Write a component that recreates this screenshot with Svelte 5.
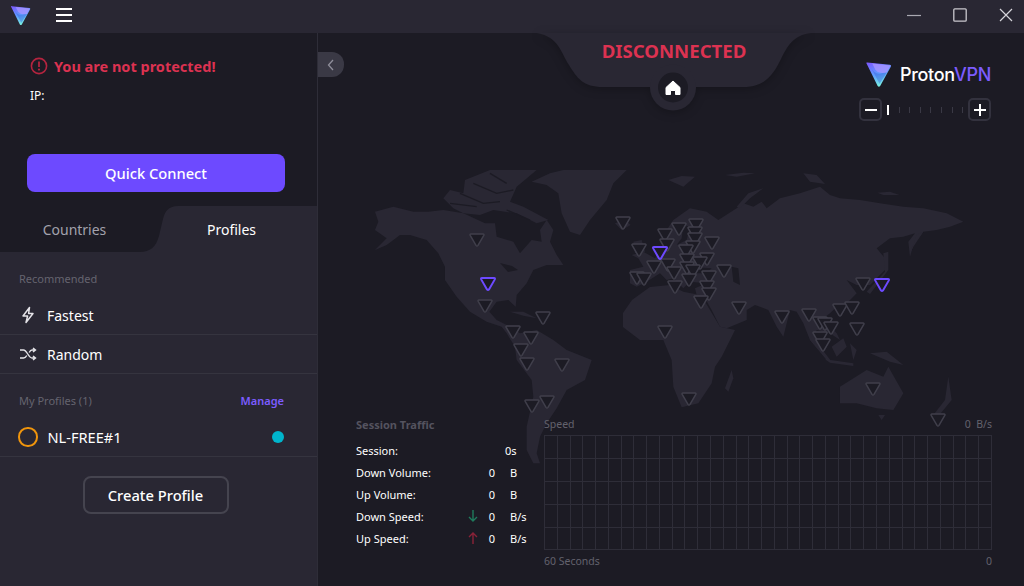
<script>
	// marker centres in page coordinates
	const servers = [
		[477, 240], [623, 223], [639, 250], [654, 267], [637, 278], [644, 279], [485, 306], [543, 318],
		[513, 332], [531, 338], [521, 350], [527, 364], [562, 365], [547, 402], [532, 406],
		[679, 229], [696, 225], [665, 235], [695, 233], [695, 239], [693, 247], [667, 245], [712, 243],
		[686, 251], [707, 259], [700, 263], [687, 260], [668, 265], [687, 268], [693, 271], [674, 273],
		[724, 271], [709, 277], [689, 280], [675, 287], [707, 287], [709, 294], [701, 302], [739, 308],
		[782, 317], [809, 315], [840, 310], [852, 308], [863, 284], [820, 323], [825, 324], [831, 328],
		[857, 329], [665, 332], [820, 338], [823, 345], [689, 399], [873, 389], [938, 420]
	];
	const active = [[660, 253], [488, 284], [882, 285]];

	const stats = [
		{ label: 'Session:', value: '', unit: '0s' },
		{ label: 'Down Volume:', value: '0', unit: 'B' },
		{ label: 'Up Volume:', value: '0', unit: 'B' },
		{ label: 'Down Speed:', arrow: 'down', value: '0', unit: 'B/s' },
		{ label: 'Up Speed:', arrow: 'up', value: '0', unit: 'B/s' }
	];

	const tri = 'M-6,-6 H6 Q7.4,-6 6.8,-4.6 L1,5.4 Q0,6.8 -1,5.4 L-6.8,-4.6 Q-7.4,-6 -6,-6 Z';
	const ticks = Array.from({ length: 7 }, (_, i) => i);
	const cols = Array.from({ length: 36 }, (_, i) => Math.round(i * 12.77) + 0.5);
	const rows = [0.5, 23.5, 46.5, 69.5, 92.5, 114.5];
</script>

{#snippet logo(size)}
	<svg width={size} height={size} viewBox="0 0 26 26">
		<defs>
			<linearGradient id="lg{size}" x1="0.2" y1="0" x2="0.55" y2="1">
				<stop offset="0" stop-color="#7a5cff" />
				<stop offset="0.5" stop-color="#5f9dff" />
				<stop offset="1" stop-color="#7af5e0" />
			</linearGradient>
		</defs>
		<path d="M1.5,2.5 Q0.6,1.3 2.2,1.4 L24,3.6 Q25.6,3.9 25,5.4 L14.6,24 Q13.4,25.6 12.2,24 Z" fill="url(#lg{size})" />
		<path d="M7,2.4 L24.6,4.4 L21,11 Q14,13 10,8.5 Z" fill="#a893ff" opacity="0.8" />
		<path d="M6,7 Q10,14 17,11.5 L21,11 L14,22 Z" fill="#2b4fd0" opacity="0.35" />
	</svg>
{/snippet}

<div class="app">
	<header class="titlebar">
		<div class="brand">{@render logo(21)}</div>
		<div class="burger"><i></i><i></i><i></i></div>
		<div class="controls">
			<svg width="14" height="14" viewBox="0 0 14 14"><path d="M0,7.5 H14" stroke="#aaa9b2" stroke-width="1.2" /></svg>
			<svg width="14" height="14" viewBox="0 0 14 14"><rect x="0.8" y="0.8" width="12.4" height="12.4" rx="1" fill="none" stroke="#c9c8ce" stroke-width="1.3" /></svg>
			<svg width="14" height="14" viewBox="0 0 14 14"><path d="M1,1 L13,13 M13,1 L1,13" stroke="#d5d4da" stroke-width="1.2" /></svg>
		</div>
	</header>

	<div class="body">
		<aside class="sidebar">
			<section class="status">
				<div class="warning">
					<svg width="18" height="18" viewBox="0 0 18 18">
						<circle cx="9" cy="9" r="7.6" fill="none" stroke="#b4243f" stroke-width="1.6" />
						<path d="M9,4.6 V10" stroke="#b4243f" stroke-width="1.8" />
						<circle cx="9" cy="12.6" r="1.1" fill="#b4243f" />
					</svg>
					<span>You are not protected!</span>
				</div>
				<div class="ip">IP:</div>
				<button class="quick">Quick Connect</button>
			</section>

			<div class="tabs">
				<svg class="tabshape" width="317" height="46" viewBox="0 0 317 46">
					<path d="M0,0 H178 C169,0 165,5 163,13 L159,30 C156,41 150,46 140,46 H0 Z" fill="#1c1b24" />
				</svg>
				<div class="tab">Countries</div>
				<div class="tab on">Profiles</div>
			</div>

			<div class="panel">
				<div class="heading first"><span>Recommended</span></div>
				<div class="row first-row">
					<svg class="ico" width="18" height="18" viewBox="0 0 18 18">
						<path d="M10.5,1.5 L4,10 H8.6 L7,16.5 L14,7.5 H9.6 Z" fill="none" stroke="#e4e3e8" stroke-width="1.5" stroke-linejoin="round" />
					</svg>
					<span>Fastest</span>
				</div>
				<div class="row">
					<svg class="ico" width="18" height="18" viewBox="0 0 18 18">
						<path d="M1,5 H4.5 C8,5 9.5,13 13,13 H16 M1,13 H4.5 C6,13 7,12 7.8,10.5 M10.2,7.5 C11,6 12,5 13,5 H16 M14,3 L16.5,5 L14,7 M14,11 L16.5,13 L14,15" fill="none" stroke="#e4e3e8" stroke-width="1.4" />
					</svg>
					<span>Random</span>
				</div>
				<div class="heading">
					<span>My Profiles (1)</span>
					<a class="manage" href="#manage">Manage</a>
				</div>
				<div class="row profile">
					<span class="ring"></span>
					<span>NL-FREE#1</span>
					<span class="dot"></span>
				</div>
				<button class="create">Create Profile</button>
			</div>
		</aside>

		<main class="map">
			<svg class="world" width="706" height="553" viewBox="318 33 706 553">
				<g fill="#292733">
					<g transform="translate(350,170) scale(.33333)">
						<path d="M75,125 L130,110 L190,125 L235,125 L280,120 L340,130 L405,160 L435,160 L440,200 L490,215 L510,250 L545,210 L575,215 L570,180 L590,150 L610,180 L600,215 L620,255 L640,285 L590,285 L550,300 L530,340 L500,375 L497,410 L475,390 L440,395 L418,425 L440,450 L470,465 L510,490 L560,480 L610,510 L650,540 L725,570 L705,630 L650,660 L620,715 L590,760 L570,800 L560,850 L570,880 L550,880 L530,840 L530,770 L550,680 L545,630 L500,570 L495,530 L470,490 L455,470 L410,455 L360,425 L320,380 L285,330 L285,290 L265,250 L230,210 L180,195 L150,195 L110,225 L75,240 L110,205 L75,180 L85,155 Z" />
						<path d="M280,85 L300,60 L340,70 L345,30 L420,0 L560,0 L500,50 L480,95 L520,110 L595,150 L560,160 L500,130 L430,120 L390,135 L340,130 L310,115 Z" />
						<path d="M545,35 L600,10 L640,0 L830,0 L790,40 L770,90 L720,150 L690,195 L660,185 L635,130 L625,70 L590,45 Z" />
						<path d="M480,425 L520,425 L560,445 L520,437 Z M565,447 L590,450 L575,458 Z M795,160 L825,150 L842,165 L815,180 Z" />
					</g>
					<g transform="translate(640,170) scale(.33333)">
						<path d="M-30,300 L10,290 L-5,265 L-25,255 L10,245 L45,265 L75,225 L100,215 L70,195 L100,150 L150,115 L200,125 L235,150 L290,115 L310,100 L340,110 L365,95 L380,115 L420,85 L480,70 L540,50 L570,75 L600,85 L660,90 L720,100 L790,110 L850,115 L920,130 L970,155 L930,170 L890,180 L850,185 L820,225 L810,260 L805,215 L825,190 L790,200 L750,205 L710,235 L735,265 L740,295 L710,325 L690,345 L650,345 L620,330 L650,370 L625,395 L590,410 L570,430 L550,445 L590,490 L600,510 L570,490 L530,480 L525,500 L545,550 L510,510 L490,460 L470,425 L450,420 L430,500 L410,470 L385,420 L345,405 L320,420 L320,450 L260,475 L240,470 L215,420 L195,385 L170,375 L165,355 L200,340 L150,335 L130,355 L100,325 L80,330 L60,310 L20,335 L-10,350 L-30,340 Z" />
						<path d="M-51,429 L-24,390 L30,351 L90,345 L130,365 L180,375 L195,395 L240,470 L285,480 L245,560 L225,590 L215,640 L175,700 L125,712 L100,650 L95,570 L70,510 L0,510 L-51,471 Z" />
						<path d="M600,650 L680,600 L730,620 L745,590 L790,670 L760,720 L710,715 L650,700 L600,700 Z M715,735 L735,735 L725,750 Z" />
						<path d="M255,655 L275,600 L280,625 L265,665 Z" />
						<path d="M510,510 L540,530 L575,575 L560,570 Z M555,568 L640,580 L640,588 L570,578 Z M575,530 L610,505 L620,530 L590,560 Z M630,520 L650,540 L640,570 Z M690,550 L740,545 L790,585 L750,575 Z" />
						<path d="M730,250 L745,245 L745,300 L690,372 L680,365 L735,305 Z M808,255 L830,195 L850,185 L820,230 Z" />
						<path d="M-20,215 L5,210 L15,245 L-15,250 Z" />
						<path d="M290,110 L325,70 L370,55 L330,85 L300,115 Z M85,30 L125,18 L165,20 L130,50 Z M255,15 L310,8 L345,10 L290,20 Z M490,10 L530,15 L555,42 L510,35 Z M712,68 L750,65 L778,75 L730,75 Z" />
						<path d="M880,735 L915,690 L925,620 L935,690 L890,745 Z" />
					</g>
				</g>
				<!-- seas and channels cut back out of the land -->
				<g fill="#1c1b24" transform="translate(640,170) scale(.33333)">
					<path d="M275,290 L295,295 L300,345 L280,335 Z M150,290 L215,295 L200,310 L160,310 Z M130,165 L125,205 L110,225 L140,210 L150,170 Z" />
				</g>
				<g fill="none" stroke="#1c1b24" stroke-width="1.3" transform="translate(350,170) scale(.33333)">
					<path d="M330,70 L400,100 L450,95 M370,40 L440,70 L490,60 M420,10 L470,40 M300,100 L380,110 M470,120 L540,150" stroke-width="4" />
				</g>
				<path fill="#1c1b24" d="M500,263 L512,266 L518,270 L508,272 Z" />

				{#each servers as [x, y]}
					<path d={tri} transform="translate({x},{y})" fill="#1c1b24" stroke="#403f4b" stroke-width="1.5" />
				{/each}
				{#each active as [x, y]}
					<path d={tri} transform="translate({x},{y})" fill="#1c1b24" stroke="#6d4aff" stroke-width="2" />
				{/each}
			</svg>

			<button class="collapse" aria-label="Collapse">
				<svg width="10" height="12" viewBox="0 0 10 12"><path d="M7,1 L2.5,6 L7,11" fill="none" stroke="#8f8e9a" stroke-width="1.3" /></svg>
			</button>

			<div class="notch">
				<svg width="274" height="78" viewBox="0 0 274 78">
					<path d="M0,0 C22,4 24,20 32,32 C40,45 46,54 66,54 H206 C228,54 236,42 244,26 C250,14 256,2 274,0 Z" fill="#292733" />
					<circle cx="136" cy="54.5" r="23" fill="#292733" />
					<circle cx="136" cy="54.5" r="15" fill="#1c1b24" />
					<path d="M136,48 L129,54.5 V61.5 H133.5 V57.5 H138.5 V61.5 H143 V54.5 Z" fill="#fff" stroke="#fff" stroke-width="1" stroke-linejoin="round" />
				</svg>
				<div class="state">DISCONNECTED</div>
			</div>

			<div class="proton">
				<div class="wordmark">
					{@render logo(27)}
					<span>Proton<b>VPN</b></span>
				</div>
				<div class="zoom">
					<button class="zbtn" aria-label="Zoom out"><svg width="12" height="12" viewBox="0 0 12 12"><path d="M0,6 H12" stroke="#fff" stroke-width="2" /></svg></button>
					<div class="slider">
						<i class="knob"></i>
						{#each ticks as t (t)}<i></i>{/each}
					</div>
					<button class="zbtn" aria-label="Zoom in"><svg width="12" height="12" viewBox="0 0 12 12"><path d="M0,6 H12 M6,0 V12" stroke="#fff" stroke-width="2" /></svg></button>
				</div>
			</div>

			<section class="traffic">
				<h3>Session Traffic</h3>
				<div class="stats">
					{#each stats as s}
						<span class="label">{s.label}</span>
						<span class="arrow">
							{#if s.arrow === 'down'}
								<svg width="10" height="12" viewBox="0 0 10 12"><path d="M5,0 V11 M1,7 L5,11 L9,7" fill="none" stroke="#1f7a5c" stroke-width="1.4" /></svg>
							{:else if s.arrow === 'up'}
								<svg width="10" height="12" viewBox="0 0 10 12"><path d="M5,12 V1 M1,5 L5,1 L9,5" fill="none" stroke="#8a2238" stroke-width="1.4" /></svg>
							{/if}
						</span>
						<span class="value">{s.value}</span>
						<span class="unit">{s.unit}</span>
					{/each}
				</div>
			</section>

			<section class="speed">
				<div class="caption"><span>Speed</span><span>0&nbsp; B/s</span></div>
				<svg class="grid" width="448" height="115" viewBox="0 0 448 115">
					{#each cols as x (x)}<path d="M{x},0 V115" />{/each}
					{#each rows as y (y)}<path d="M0,{y} H448" />{/each}
				</svg>
				<div class="caption bottom"><span>60 Seconds</span><span>0</span></div>
			</section>
		</main>
	</div>
</div>

<style>
	:global(body) {
		margin: 0;
		background: #1c1b24;
	}

	.app {
		width: 1024px;
		height: 586px;
		display: flex;
		flex-direction: column;
		overflow: hidden;
		color: #fff;
		font-family: 'Noto Sans', 'Open Sans', sans-serif;
	}

	button {
		font-family: inherit;
		color: inherit;
		cursor: pointer;
	}

	.titlebar {
		height: 33px;
		flex: none;
		display: flex;
		align-items: center;
		background: #292733;
	}

	.brand {
		margin-left: 10px;
		height: 21px;
		margin-top: -2px;
	}

	.burger {
		margin-left: 25px;
		width: 16px;
		display: flex;
		flex-direction: column;
		gap: 4px;
		margin-top: -3px;
	}

	.burger i {
		height: 2px;
		background: #fff;
	}

	.controls {
		margin-left: auto;
		margin-right: 11px;
		display: flex;
		gap: 32px;
		margin-top: -3px;
	}

	.body {
		flex: 1;
		display: flex;
		min-height: 0;
	}

	.sidebar {
		width: 317px;
		flex: none;
		display: flex;
		flex-direction: column;
		background: #292733;
		border-right: 1px solid #2e2d38;
	}

	.status {
		height: 173px;
		flex: none;
		box-sizing: border-box;
		padding: 23px 32px 0 27px;
		background: #1c1b24;
		display: flex;
		flex-direction: column;
	}

	.warning {
		display: flex;
		align-items: center;
		gap: 6px;
		font-size: 14.5px;
		font-weight: 700;
		color: #dc3251;
		line-height: 20px;
		margin-left: 3px;
	}

	.ip {
		margin: 10px 0 0 3px;
		font-size: 12px;
		line-height: 20px;
	}

	.quick {
		margin-top: 48px;
		width: 258px;
		height: 38px;
		border: 0;
		border-radius: 8px;
		background: #6d4aff;
		font-size: 14.7px;
		font-weight: 500;
	}

	.tabs {
		position: relative;
		height: 46px;
		flex: none;
		display: flex;
	}

	.tabshape {
		position: absolute;
		inset: 0;
	}

	.tab {
		position: relative;
		width: 149px;
		text-align: center;
		line-height: 48px;
		font-size: 14px;
		color: #a3a2ad;
	}

	.tab.on {
		width: 165px;
		color: #fff;
	}

	.panel {
		flex: 1;
		display: flex;
		flex-direction: column;
	}

	.heading {
		height: 27px;
		margin-top: 13px;
		padding: 0 33px 0 19px;
		display: flex;
		align-items: center;
		justify-content: space-between;
		font-size: 11px;
		color: #65646f;
	}

	.manage {
		color: #7c5cff;
		font-weight: 600;
		text-decoration: none;
	}

	.row {
		height: 38px;
		display: flex;
		align-items: center;
		gap: 10px;
		padding: 0 33px 0 19px;
		border-bottom: 1px solid #35343f;
		font-size: 14px;
	}

	.first-row,
	.profile {
		margin-top: 4px;
	}

	.ico {
		flex: none;
	}

	.ring {
		width: 15.5px;
		height: 15.5px;
		margin-left: -1px;
		border: 2px solid #f0950c;
		border-radius: 50%;
		flex: none;
	}

	.profile {
		font-size: 14.6px;
	}

	.dot {
		width: 12px;
		height: 12px;
		margin-left: auto;
		border-radius: 50%;
		background: #00b5cc;
	}

	.create {
		align-self: center;
		margin: 19px 6px 0 0;
		width: 146px;
		height: 38px;
		border: 2px solid #45444f;
		border-radius: 8px;
		background: transparent;
		font-size: 14.7px;
		font-weight: 500;
	}

	.map {
		position: relative;
		flex: 1;
		background: #1c1b24;
	}

	.world {
		position: absolute;
		inset: 0;
	}

	.collapse {
		position: absolute;
		left: 0;
		top: 19px;
		width: 26px;
		height: 25px;
		padding: 0;
		border: 0;
		border-radius: 0 12px 12px 0;
		background: #3a3945;
		display: flex;
		align-items: center;
		justify-content: center;
	}

	.notch {
		position: absolute;
		left: 219px;
		top: 0;
		width: 274px;
		height: 78px;
	}

	.notch svg {
		display: block;
		filter: drop-shadow(0 2px 5px rgba(0, 0, 0, 0.25));
	}

	.state {
		position: absolute;
		top: 5px;
		left: 0;
		right: 0;
		text-align: center;
		font-size: 18.6px;
		font-weight: 700;
		line-height: 26px;
		color: #dc3251;
	}

	.proton {
		position: absolute;
		right: 33px;
		top: 28px;
		width: 132px;
		display: flex;
		flex-direction: column;
		gap: 10px;
	}

	.wordmark {
		display: flex;
		align-items: center;
		gap: 8px;
		margin-left: 6px;
		height: 27px;
		font-family: Inter, sans-serif;
		font-size: 18px;
		font-weight: 500;
		letter-spacing: -0.3px;
	}

	.wordmark b {
		font-weight: 500;
		color: #7c5cff;
	}

	.zoom {
		display: flex;
		align-items: center;
		justify-content: space-between;
	}

	.zbtn {
		width: 23px;
		height: 23px;
		flex: none;
		padding: 0;
		border: 2px solid #33323e;
		border-radius: 5px;
		background: #1c1b24;
		display: flex;
		align-items: center;
		justify-content: center;
	}

	.slider {
		display: flex;
		align-items: center;
		gap: 9.6px;
		flex: 1;
		min-width: 0;
		padding-left: 5px;
	}

	.slider i {
		width: 1px;
		height: 6px;
		background: #3a3945;
	}

	.slider .knob {
		width: 2px;
		height: 10px;
		background: #fff;
	}

	.traffic {
		position: absolute;
		left: 38px;
		top: 384px;
		width: 172px;
		font-size: 11px;
	}

	.traffic h3 {
		margin: 0 0 6px;
		font-size: 11px;
		line-height: 16px;
		font-weight: 700;
		color: #54535f;
	}

	.stats {
		display: grid;
		grid-template-columns: 108px 17px 22px 1fr;
		grid-auto-rows: 22px;
		align-items: center;
	}

	.arrow {
		height: 12px;
		display: flex;
		justify-content: center;
	}

	.arrow svg {
		display: block;
	}

	.value {
		text-align: center;
	}

	.unit {
		padding-left: 7px;
	}

	.stats .unit:nth-child(4) {
		margin-left: -5px;
	}

	.speed {
		position: absolute;
		left: 226px;
		top: 384px;
		width: 448px;
		font-size: 10.5px;
		color: #63626d;
	}

	.caption {
		display: flex;
		justify-content: space-between;
		height: 18px;
		line-height: 15px;
	}

	.caption.bottom {
		height: 20px;
		line-height: 22px;
	}

	.grid {
		display: block;
		fill: none;
		stroke: #2e2d38;
		stroke-width: 1;
	}
</style>
